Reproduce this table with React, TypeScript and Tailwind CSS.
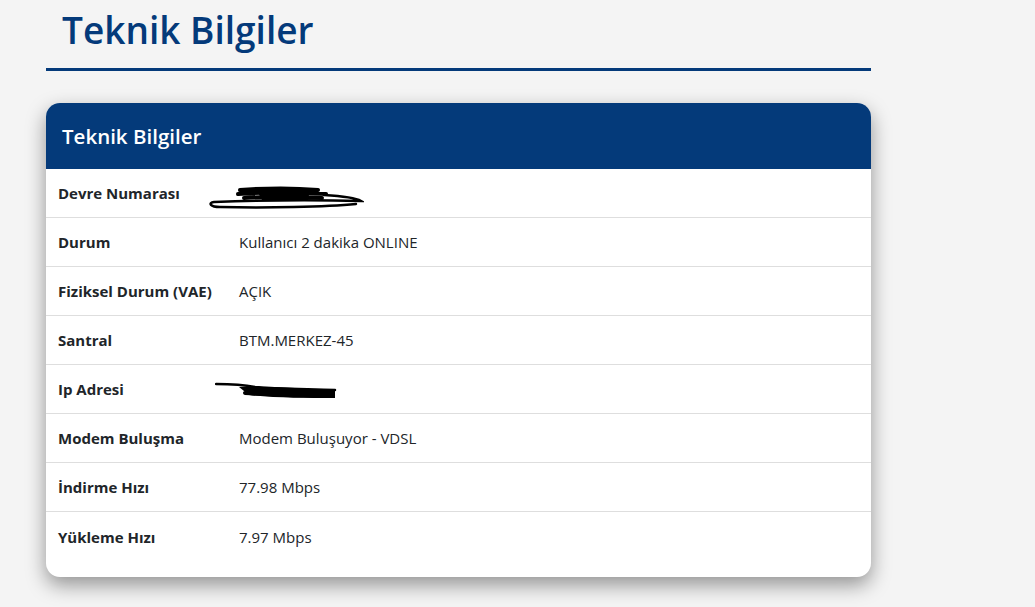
import React from "react";

const rows: { label: string; value: string; redact?: "devre" | "ip" }[] = [
    { label: "Devre Numarası", value: "", redact: "devre" },
    { label: "Durum", value: "Kullanıcı 2 dakika ONLINE" },
    { label: "Fiziksel Durum (VAE)", value: "AÇIK" },
    { label: "Santral", value: "BTM.MERKEZ-45" },
    { label: "Ip Adresi", value: "", redact: "ip" },
    { label: "Modem Buluşma", value: "Modem Buluşuyor - VDSL" },
    { label: "İndirme Hızı", value: "77.98 Mbps" },
    { label: "Yükleme Hızı", value: "7.97 Mbps" },
];

// black marker scribbles over the hidden values
function DevreScribble() {
    return (
        <svg
            className="absolute left-[-33px] top-[-8px]"
            width="158"
            height="24"
            viewBox="0 0 158 24"
            fill="none"
        >
            <path
                d="M34 4 C 60 2, 90 2, 112 4 M32 8 C 60 6, 95 6, 120 8 M38 12 C 70 10, 100 11, 116 12"
                stroke="#000"
                strokeWidth="4"
                strokeLinecap="round"
            />
            <path d="M50 3 L 104 3 L 102 14 L 56 14 Z" fill="#000" />
            <path
                d="M118 9 C 135 10, 150 12, 155 15 C 120 14, 60 14, 8 16 C 2 17, 4 21, 14 21 C 60 22, 120 21, 150 18"
                stroke="#000"
                strokeWidth="2.5"
                strokeLinecap="round"
            />
        </svg>
    );
}

function IpScribble() {
    return (
        <svg
            className="absolute left-[-24px] top-[-9px]"
            width="124"
            height="22"
            viewBox="0 0 124 22"
            fill="none"
        >
            <path
                d="M1 3 C 20 3, 30 4, 40 6 C 60 8, 90 8, 120 9"
                stroke="#000"
                strokeWidth="2.5"
                strokeLinecap="round"
            />
            <path
                d="M24 6 C 50 5, 90 7, 120 10 L 120 17 C 90 17, 60 17, 34 14 Z"
                fill="#000"
            />
            <path
                d="M30 12 C 60 14, 95 15, 118 15"
                stroke="#000"
                strokeWidth="4"
                strokeLinecap="round"
            />
        </svg>
    );
}

export default function App() {
    return (
        <div className="min-h-[607px] w-full bg-[#f4f4f4] font-['Open_Sans',sans-serif] text-[#212529]">
            <div className="ml-[46px] w-[825px]">
                <div className="border-b-[3px] border-[#043a7a] pb-[14px] pl-4 pt-[5px]">
                    <h1 className="text-[37px] font-semibold leading-[49px] text-[#043a7a]">
                        Teknik Bilgiler
                    </h1>
                </div>

                <div className="mt-[32px] overflow-hidden rounded-[14px] bg-white pb-4 shadow-[0_8px_20px_rgba(0,0,0,0.4)]">
                    <div className="flex h-[66px] items-center bg-[#043a7a] px-4">
                        <h2 className="text-[20.5px] font-semibold text-white">
                            Teknik Bilgiler
                        </h2>
                    </div>
                    <div className="flex flex-col">
                        {rows.map((row, i) => (
                            <div
                                key={row.label}
                                className={`flex h-[49px] items-center pt-[1px] text-[15px] ${
                                    i < rows.length - 1 ? "border-b border-[#dedede]" : ""
                                }`}
                            >
                                <div className="w-[193px] shrink-0 pl-3 font-bold">
                                    {row.label}
                                </div>
                                <div className="relative">
                                    {row.redact === "devre" && <DevreScribble />}
                                    {row.redact === "ip" && <IpScribble />}
                                    {row.value}
                                </div>
                            </div>
                        ))}
                    </div>
                </div>
            </div>
        </div>
    );
}
